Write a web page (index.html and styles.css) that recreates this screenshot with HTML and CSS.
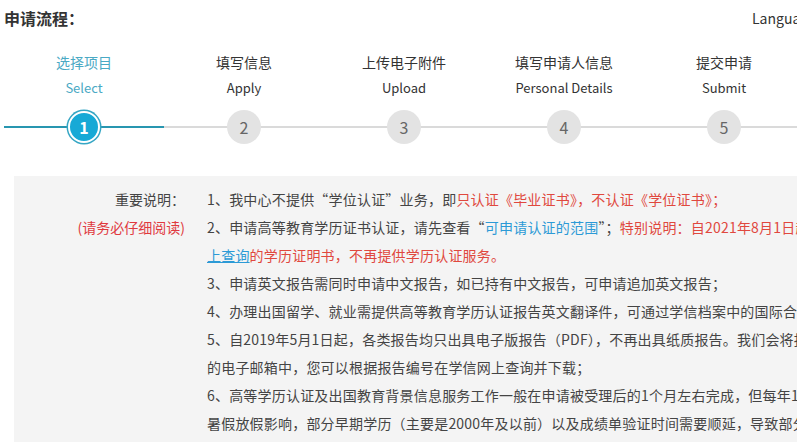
FILE: index.html
```html
<!DOCTYPE html>
<html lang="zh-CN">
<head>
<meta charset="utf-8">
<title>申请流程</title>
<link rel="stylesheet" href="styles.css">
</head>
<body>
<div class="page">
  <header class="top">
    <h1 class="title">申请流程：</h1>
    <div class="lang">Language</div>
  </header>

  <ol class="steps">
    <li class="step active">
      <div class="cn">选择项目</div>
      <div class="en">Select</div>
      <div class="node"><span class="num">1</span></div>
    </li>
    <li class="step">
      <div class="cn">填写信息</div>
      <div class="en">Apply</div>
      <div class="node"><span class="num">2</span></div>
    </li>
    <li class="step">
      <div class="cn">上传电子附件</div>
      <div class="en">Upload</div>
      <div class="node"><span class="num">3</span></div>
    </li>
    <li class="step">
      <div class="cn">填写申请人信息</div>
      <div class="en">Personal Details</div>
      <div class="node"><span class="num">4</span></div>
    </li>
    <li class="step">
      <div class="cn">提交申请</div>
      <div class="en">Submit</div>
      <div class="node"><span class="num">5</span></div>
    </li>
  </ol>

  <section class="notice">
    <div class="label">
      <div>重要说明：</div>
      <div class="warn">(请务必仔细阅读)</div>
    </div>
    <div class="content">
      <div class="line">1、我中心不提供“学位认证”业务，即<span class="red">只认证《毕业证书》，不认证《学位证书》；</span></div>
      <div class="line">2、申请高等教育学历证书认证，请先查看“<a class="blue" href="#">可申请认证的范围</a>”；<span class="red">特别说明：自2021年8月1日起，不再受理可在学信网</span></div>
      <div class="line"><a class="blue ul" href="#">上查询</a><span class="red">的学历证明书，不再提供学历认证服务。</span></div>
      <div class="line">3、申请英文报告需同时申请中文报告，如已持有中文报告，可申请追加英文报告；</div>
      <div class="line">4、办理出国留学、就业需提供高等教育学历认证报告英文翻译件，可通过学信档案中的国际合作申请；</div>
      <div class="line">5、自2019年5月1日起，各类报告均只出具电子版报告（PDF），不再出具纸质报告。我们会将报告发送至您</div>
      <div class="line">的电子邮箱中，您可以根据报告编号在学信网上查询并下载；</div>
      <div class="line">6、高等学历认证及出国教育背景信息服务工作一般在申请被受理后的1个月左右完成，但每年1-2月受寒</div>
      <div class="line">暑假放假影响，部分早期学历（主要是2000年及以前）以及成绩单验证时间需要顺延，导致部分报告</div>
    </div>
  </section>
</div>
</body>
</html>
```

FILE: styles.css
```css
html, body {
  margin: 0;
  padding: 0;
  background: #ffffff;
  overflow: hidden;
}

body {
  font-family: "Noto Sans CJK SC", "Noto Sans", sans-serif;
  color: #333333;
  font-size: 14px;
}

.page {
  width: 1100px;
  padding: 0 0 0 4px;
}

.top {
  display: flex;
  align-items: center;
  height: 36px;
}

.title {
  margin: 0;
  font-size: 16px;
  font-weight: bold;
  color: #333333;
  line-height: 36px;
}

.lang {
  margin-left: 668px;
  font-size: 14px;
  color: #333333;
  line-height: 36px;
}

.steps {
  list-style: none;
  margin: 14px 0 0 0;
  padding: 0;
  display: flex;
}

.step {
  width: 160px;
  flex: none;
  display: flex;
  flex-direction: column;
  align-items: center;
  color: #333333;
}

.step .cn {
  font-size: 14px;
  line-height: 24px;
}

.step .en {
  font-size: 13px;
  line-height: 24px;
  margin-top: 2px;
}

.step .node {
  position: relative;
  width: 100%;
  height: 38px;
  margin-top: 8px;
  display: flex;
  align-items: center;
  justify-content: center;
}

.step .node::before {
  content: "";
  position: absolute;
  left: 0;
  right: 0;
  top: 18px;
  height: 2px;
  background: #dadada;
}

.step .num {
  position: relative;
  width: 34px;
  height: 34px;
  border-radius: 50%;
  background: #e3e3e3;
  color: #666666;
  font-size: 16px;
  line-height: 34px;
  text-align: center;
}

.step.active {
  color: #4aa9c4;
}

.step.active .node::before {
  background: #2896b0;
}

.step.active .num {
  width: 28px;
  height: 28px;
  line-height: 28px;
  background: #17a9d6;
  color: #ffffff;
  border: 2px solid #ffffff;
  box-shadow: 0 0 0 1.5px #35a6c4;
  font-weight: bold;
}

.notice {
  margin: 30px 0 0 10px;
  background: #f4f4f4;
  display: flex;
  padding: 9px 0 20px 0;
}

.label {
  width: 171px;
  flex: none;
  text-align: right;
  line-height: 28px;
  color: #444444;
}

.label .warn {
  color: #e0393e;
}

.content {
  margin-left: 22px;
  line-height: 28px;
  color: #444444;
  letter-spacing: 0.2px;
}

.line {
  white-space: nowrap;
}

.red {
  color: #e0483e;
}

.blue {
  color: #2c9ad6;
  text-decoration: none;
}

.blue.ul {
  text-decoration: underline;
}
```
